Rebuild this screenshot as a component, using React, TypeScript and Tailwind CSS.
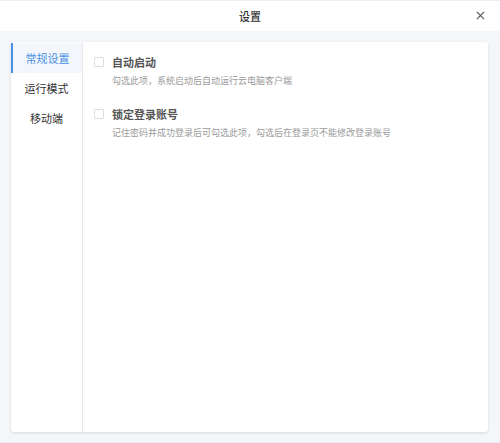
import React from "react";

export default function App() {
  const font = { fontFamily: '"Noto Sans CJK SC", "Noto Sans", sans-serif' };
  return (
    <div className="w-[500px] h-[443px] flex flex-col bg-[#f4f6fa] border-b border-[#e6e9f0]" style={font}>
      <div className="h-[31px] shrink-0 bg-white border-t border-[#eceef2] relative flex items-center justify-center">
        <span className="text-[11px] text-[#333] font-medium">设置</span>
        <svg className="absolute right-[15px] top-[10px]" width="9" height="9" viewBox="0 0 10 10">
          <path d="M1 1L9 9M9 1L1 9" stroke="#555" strokeWidth="1.3" />
        </svg>
      </div>
      <div className="flex-1 pl-[11px] pr-[12px] pt-[11px] pb-[10px] flex">
        <div className="flex-1 bg-white rounded-[3px] shadow-[0_1px_3px_rgba(0,0,0,0.12)] flex">
          <div className="w-[72px] border-r border-[#e8e8e8] flex flex-col pt-[1px]">
            <div className="h-[30px] flex items-center justify-center bg-[#f3f7fc] border-l-2 border-[#4a90e2] text-[11px] text-[#4a90e2]">常规设置</div>
            <div className="h-[30px] flex items-center justify-center text-[11px] text-[#333]">运行模式</div>
            <div className="h-[30px] flex items-center justify-center text-[11px] text-[#333]">移动端</div>
          </div>
          <div className="flex-1 pl-[11px] pt-[12px] flex flex-col gap-[19px]">
            <div className="flex flex-col">
              <div className="flex items-center gap-[8px]">
                <div className="w-[10px] h-[10px] border border-[#dcdcdc] rounded-[1px]" />
                <span className="text-[11px] font-bold text-[#555]">自动启动</span>
              </div>
              <div className="pl-[18px] mt-[3px] text-[9px] text-[#9a9a9a]">勾选此项，系统启动后自动运行云电脑客户端</div>
            </div>
            <div className="flex flex-col">
              <div className="flex items-center gap-[8px]">
                <div className="w-[10px] h-[10px] border border-[#dcdcdc] rounded-[1px]" />
                <span className="text-[11px] font-bold text-[#555]">锁定登录账号</span>
              </div>
              <div className="pl-[18px] mt-[3px] text-[9px] text-[#9a9a9a]">记住密码并成功登录后可勾选此项，勾选后在登录页不能修改登录账号</div>
            </div>
          </div>
        </div>
      </div>
    </div>
  );
}
